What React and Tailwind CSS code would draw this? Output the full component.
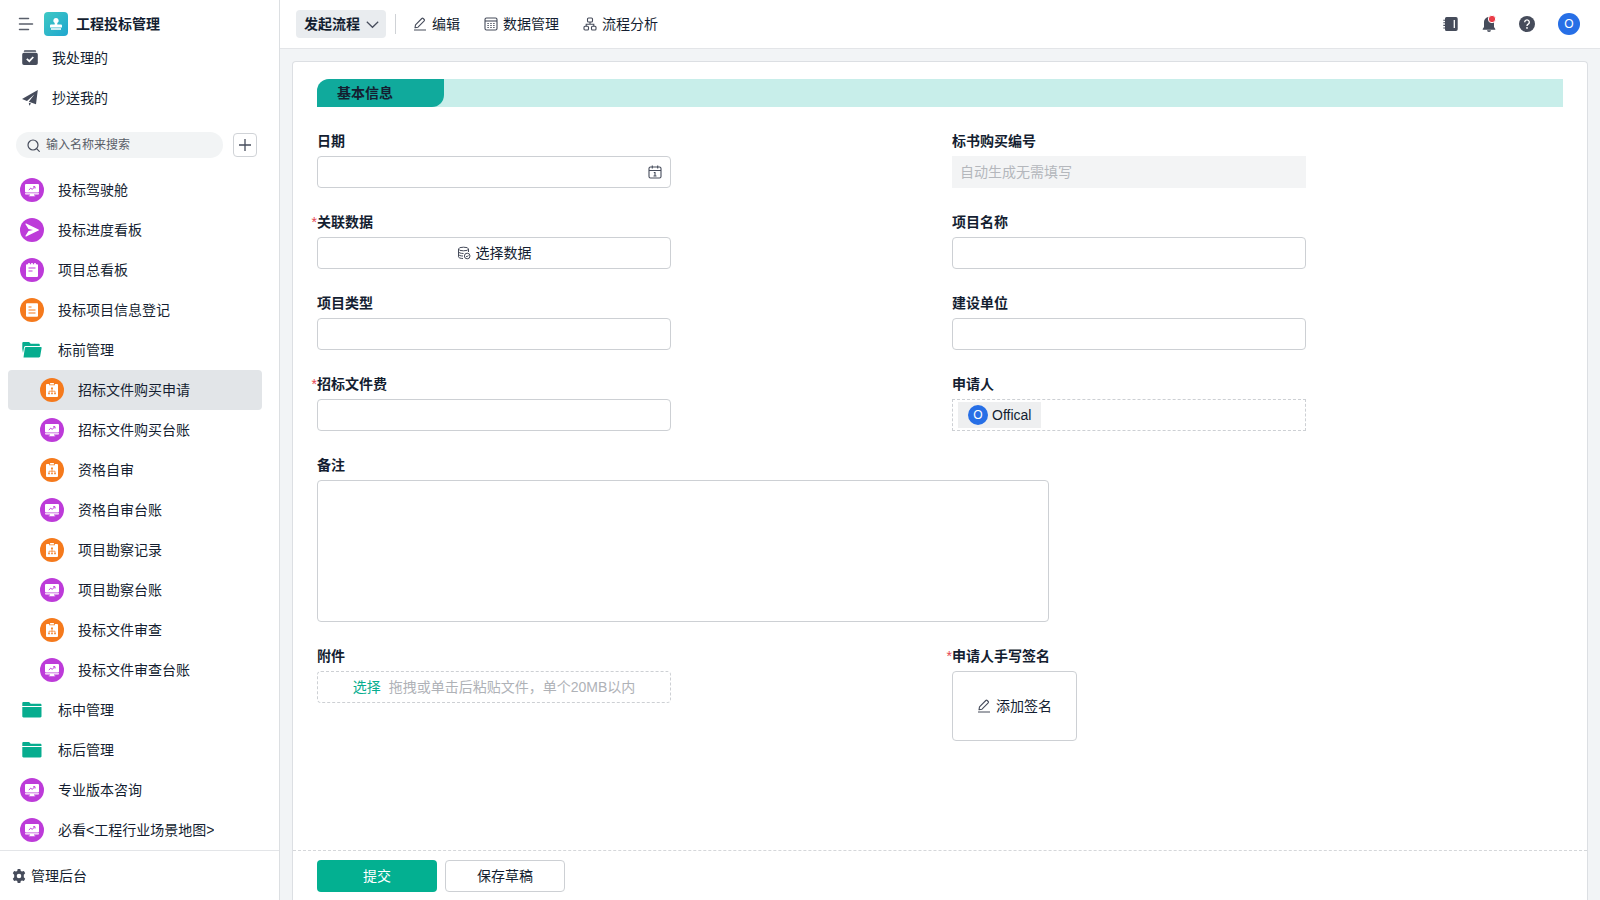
import React from 'react';
import clsx from 'clsx';

const navItems = [
  { label: '投标驾驶舱', icon: 'board' },
  { label: '投标进度看板', icon: 'send' },
  { label: '项目总看板', icon: 'note' },
  { label: '投标项目信息登记', icon: 'form' },
  { label: '标前管理', icon: 'folderOpen' },
  { label: '招标文件购买申请', icon: 'flow', child: true, active: true },
  { label: '招标文件购买台账', icon: 'board', child: true },
  { label: '资格自审', icon: 'flow', child: true },
  { label: '资格自审台账', icon: 'board', child: true },
  { label: '项目勘察记录', icon: 'flow', child: true },
  { label: '项目勘察台账', icon: 'board', child: true },
  { label: '投标文件审查', icon: 'flow', child: true },
  { label: '投标文件审查台账', icon: 'board', child: true },
  { label: '标中管理', icon: 'folder' },
  { label: '标后管理', icon: 'folder' },
  { label: '专业版本咨询', icon: 'board' },
  { label: '必看<工程行业场景地图>', icon: 'board' },
];

const navIcons = {
  board: (
    <>
      <circle cx="12" cy="12" r="12" fill="#bd3bd9" />
      <rect x="5" y="6" width="14" height="8.5" rx="1" fill="#fff" />
      <path d="M5 15.200h14v.6a.8.8 0 0 1-.8.8H14v.9h1.200v.8H8.800v-.8H10v-.9H5.800a.8.8 0 0 1-.8-.8z" fill="#fff" />
      <path d="M8.800 12l2-1.800 1.300 1.200 2.300-2.200M13.200 8.700H15V10.500" fill="none" stroke="#bd3bd9" strokeWidth="1" />
    </>
  ),
  send: (
    <>
      <circle cx="12" cy="12" r="12" fill="#bd3bd9" />
      <path d="M5.500 6.200c-.3-.6.200-.9.700-.7l12.300 5.900c.6.3.6.900 0 1.200L6.200 18.500c-.5.200-1-.1-.7-.7L8.500 13l4.500-1-4.500-1z" fill="#fff" />
    </>
  ),
  note: (
    <>
      <circle cx="12" cy="12" r="12" fill="#bd3bd9" />
      <path d="M7 6.200h1.200V5h1.600v1.200h1.400V5h1.600v1.200h1.400V5h1.600v1.200H17a1 1 0 0 1 1 1V18a1 1 0 0 1-1 1H7a1 1 0 0 1-1-1V7.200a1 1 0 0 1 1-1z" fill="#fff" />
      <path d="M8.500 10h7M8.500 13h4" stroke="#bd3bd9" strokeWidth="1.200" />
    </>
  ),
  form: (
    <>
      <circle cx="12" cy="12" r="12" fill="#f57a1d" />
      <rect x="6" y="5.300" width="12" height="13.400" rx="1" fill="#fff" />
      <path d="M8.500 9h3M8.500 12h7M8.500 15h7" stroke="#f57a1d" strokeWidth="1.200" />
    </>
  ),
  flow: (
    <>
      <circle cx="12" cy="12" r="12" fill="#f57a1d" />
      <path d="M7 6h2.200v1.300h5.600V6H17a1 1 0 0 1 1 1v11a1 1 0 0 1-1 1H7a1 1 0 0 1-1-1V7a1 1 0 0 1 1-1z" fill="#fff" />
      <rect x="10" y="5" width="4" height="1.500" rx=".5" fill="#fff" />
      <path d="M12 11v3.500M9 14.800v-1.600h6v1.600" fill="none" stroke="#f57a1d" strokeWidth=".7" />
      <path d="M11.100 9.500h1.800v1.700h-1.800zM8.200 14.700h1.600v1.600H8.200zM11.200 14.700h1.600v1.600h-1.600zM14.200 14.700h1.600v1.600h-1.600z" fill="#f57a1d" />
    </>
  ),
  folder: (
    <path d="M2.300 5.300c0-.7.500-1.200 1.200-1.200h5.600l1.600 1.700h9.600c.7 0 1.200.5 1.200 1.200v1H2.300zM2.300 9h19.200v9.200c0 .7-.5 1.200-1.200 1.200H3.500c-.7 0-1.200-.5-1.200-1.200z" fill="#06ad8f" />
  ),
  folderOpen: (
    <path d="M2.300 5.300c0-.7.500-1.200 1.200-1.200h5.600l1.600 1.700h7.900c.7 0 1.200.5 1.200 1.200v1.100H5.600c-.8 0-1.300.4-1.500 1.200l-1.100 5.700-.7-4zM5.900 9h14.800c.7 0 1 .4.900 1l-1.400 8.300c-.1.700-.6 1.100-1.300 1.100H3.500l1.300-9.500c.1-.6.500-.9 1.100-.9z" fill="#06ad8f" />
  ),
};

function PencilIcon() {
  return (
    <svg className="size-[14px] shrink-0" viewBox="0 0 14 14" fill="none" stroke="#464c5b" strokeWidth="1.1" strokeLinejoin="round">
      <path d="M2 10.800l.5-3L8.800 1.500a1 1 0 0 1 1.400 0l1 1a1 1 0 0 1 0 1.400L5 10.200zM1 13h12" />
    </svg>
  );
}

function NavItem({ item }) {
  return (
    <a
      href="#"
      className={clsx(
        'flex h-10 items-center gap-[14px] rounded pr-3',
        item.child ? 'pl-8' : 'pl-3',
        item.active && 'bg-[#e2e5e8]'
      )}
    >
      <svg className="size-6 shrink-0" viewBox="0 0 24 24">
        {navIcons[item.icon]}
      </svg>
      <span className="truncate">{item.label}</span>
    </a>
  );
}

function Sidebar() {
  return (
    <aside className="flex w-70 shrink-0 flex-col border-r border-[#dcdfe2] bg-white">
      <div className="flex items-center pt-3 pr-4 pb-[2px] pl-[18px]">
        <button type="button" aria-label="菜单" className="mr-[10px]">
          <svg className="size-4" viewBox="0 0 16 16" stroke="#5a5f6b" strokeWidth="1.500" strokeLinecap="round">
            <path d="M1.500 2.500h9M1.500 8h13M1.500 13.500h9" />
          </svg>
        </button>
        <svg className="mr-2 size-6" viewBox="0 0 24 24">
          <defs>
            <linearGradient id="logo" x1="0" y1="0" x2="1" y2="1">
              <stop offset="0" stopColor="#3fc9c4" />
              <stop offset="1" stopColor="#1fa6cf" />
            </linearGradient>
          </defs>
          <rect width="24" height="24" rx="4" fill="url(#logo)" />
          <path d="M12 6a2.600 2.600 0 0 1 1.300 4.900V12.500H17a1 1 0 0 1 1 1v2H6v-2a1 1 0 0 1 1-1h3.700V10.900A2.600 2.600 0 0 1 12 6z" fill="#fff" />
          <path d="M7 16h10v2H7z" fill="#fff" opacity=".75" />
        </svg>
        <h1 className="font-bold">工程投标管理</h1>
      </div>

      <div className="pr-[17px] pl-2">
        <a href="#" className="flex h-10 items-center gap-[14px] pl-[14px]">
          <svg className="size-4" viewBox="0 0 16 16">
            <path d="M3 .2h10a1.200 1.200 0 0 1 1.200 1.200v.4H1.800v-.4A1.200 1.200 0 0 1 3 .2zM2 2.800h12a1.800 1.800 0 0 1 1.800 1.800v8.600A1.800 1.800 0 0 1 14 15H2A1.800 1.800 0 0 1 .2 13.200V4.600A1.800 1.800 0 0 1 2 2.800z" fill="#464c5b" />
            <path d="M4.800 8.800l2.500 2.400 4-4.200" fill="none" stroke="#fff" strokeWidth="1.700" />
          </svg>
          我处理的
        </a>
        <a href="#" className="flex h-10 items-center gap-[14px] pl-[14px]">
          <svg className="size-4" viewBox="0 0 16 16" fill="#464c5b">
            <path d="M15.800 0L0 9l5 2 7.500-6.800L6.800 11.700 14 14.300zM6.800 12.700l2.300.8-1.800 2.300z" />
          </svg>
          抄送我的
        </a>
      </div>

      <div className="flex items-center gap-[10px] pt-[14px] pr-[22px] pb-3 pl-4">
        <label className="flex h-[26px] min-w-0 flex-1 items-center gap-[5px] rounded-full bg-[#f2f4f5] pl-[10px]">
          <svg className="size-[15px] shrink-0" viewBox="0 0 15 15" fill="none" stroke="#464c5b" strokeWidth="1.200">
            <circle cx="7" cy="7" r="5" />
            <path d="M10.600 10.600l2.700 2.700" strokeLinecap="round" />
          </svg>
          <input
            type="text"
            aria-label="搜索"
            placeholder="输入名称来搜索"
            className="w-full min-w-0 bg-transparent text-xs outline-none placeholder:text-[#595e68]"
          />
        </label>
        <button type="button" aria-label="新建" className="flex size-6 items-center justify-center rounded border border-[#d0d3d7]">
          <svg className="size-[14px]" viewBox="0 0 14 14" stroke="#464c5b" strokeWidth="1.300">
            <path d="M7 1v12M1 7h12" />
          </svg>
        </button>
      </div>

      <nav className="min-h-0 flex-1 overflow-hidden pr-[17px] pl-2">
        {navItems.map((item) => (
          <NavItem key={item.label} item={item} />
        ))}
      </nav>

      <div className="flex h-[50px] shrink-0 items-center border-t border-[#e3e5e8] px-3">
        <a href="#" className="flex items-center gap-[5px]">
          <svg className="size-[14px]" viewBox="0 0 14 14">
            <path
              d="M5.700 0h2.600l.5 1.900 1.200.7 1.900-.6 1.300 2.300L11.800 5.700v2.600l1.400 1.400-1.300 2.300-1.900-.6-1.200.7-.5 1.900H5.700l-.5-1.900-1.200-.7-1.900.6L.8 9.700l1.400-1.400V5.700L.8 4.300 2.100 2l1.900.6 1.200-.7zM7 4.700a2.300 2.300 0 1 0 0 4.600 2.300 2.300 0 0 0 0-4.600z"
              fill="#464c5b"
              fillRule="evenodd"
            />
          </svg>
          管理后台
        </a>
      </div>
    </aside>
  );
}

function Header() {
  return (
    <header className="flex h-[49px] shrink-0 items-center justify-between border-b border-[#e3e5e8] bg-white pr-5 pl-4">
      <div className="flex items-center">
        <button type="button" className="flex h-7 items-center gap-[6px] rounded bg-[#e9ecef] pr-[7px] pl-2 font-bold">
          发起流程
          <svg className="size-[13px]" viewBox="0 0 13 13" fill="none" stroke="#464c5b" strokeWidth="1.200">
            <path d="M.8 3.800l5.700 5.500 5.700-5.500" />
          </svg>
        </button>
        <span className="ml-[9px] h-5 w-px bg-[#cfd2d6]" />
        <div className="ml-[17px] flex items-center gap-6">
          <button type="button" className="flex items-center gap-[5px]">
            <PencilIcon />
            编辑
          </button>
          <button type="button" className="flex items-center gap-[5px]">
            <svg className="size-[14px]" viewBox="0 0 14 14" fill="none" stroke="#464c5b" strokeWidth="1.100">
              <rect x="1" y="1" width="12" height="12" rx="1.500" />
              <path d="M1 4h12" />
              <path d="M3.400 6.500h1.400M6.300 6.500h1.400M9.200 6.500h1.400M3.400 8.500h1.400M6.300 8.500h1.400M9.200 8.500h1.400M3.400 10.500h1.400M6.300 10.500h1.400M9.200 10.500h1.400" />
            </svg>
            数据管理
          </button>
          <button type="button" className="flex items-center gap-[5px]">
            <svg className="size-[14px]" viewBox="0 0 14 14" fill="none" stroke="#464c5b" strokeWidth="1.100">
              <rect x="4.500" y="1" width="5" height="4" rx="1" />
              <rect x="1" y="9.300" width="4.500" height="3.700" rx="1" />
              <rect x="8.500" y="9.300" width="4.500" height="3.700" rx="1" />
              <path d="M7 5v2.200M3.200 9.300V7.200h7.600v2.100" />
            </svg>
            流程分析
          </button>
        </div>
      </div>

      <div className="flex items-center gap-[22px]">
        <button type="button" aria-label="通讯录">
          <svg className="size-4" viewBox="0 0 16 16">
            <path d="M3.500 1h9.500A1.700 1.700 0 0 1 14.700 2.700v10.600a1.700 1.700 0 0 1-1.700 1.700H3.500A1.500 1.500 0 0 1 2 13.500V2.500A1.500 1.500 0 0 1 3.500 1z" fill="#464c5b" />
            <path d="M.3 4.200h2.500M.3 6.800h2.500M.3 9.400h2.500M.3 12h2.500" stroke="#464c5b" strokeWidth="1.100" />
            <path d="M11.300 4v8" stroke="#fff" strokeWidth="1.300" />
          </svg>
        </button>
        <button type="button" aria-label="消息">
          <svg className="size-4 overflow-visible" viewBox="0 0 16 16">
            <path d="M8 1a5 5 0 0 1 5 5v5l1.300 2v.8H1.700V13L3 11V6a5 5 0 0 1 5-5zM6 14.300h4a2 1.700 0 0 1-4 0z" fill="#464c5b" />
            <circle cx="11" cy="3" r="3.700" fill="#ea3d48" stroke="#fff" strokeWidth="1" />
          </svg>
        </button>
        <button type="button" aria-label="帮助">
          <svg className="size-4" viewBox="0 0 16 16">
            <circle cx="8" cy="8" r="8" fill="#464c5b" />
            <path d="M5.700 6.200a2.300 2.300 0 1 1 3.500 2c-.8.500-1.200.9-1.200 1.700" fill="none" stroke="#fff" strokeWidth="1.400" />
            <circle cx="8" cy="11.900" r=".9" fill="#fff" />
          </svg>
        </button>
        <button type="button" aria-label="账号" className="ml-px flex size-[22px] items-center justify-center rounded-full bg-[#276fe6] text-xs text-white">
          O
        </button>
      </div>
    </header>
  );
}

function Field({ id, label, required, wide, children }) {
  return (
    <div className={clsx('min-w-0', wide && 'col-span-2')}>
      <label htmlFor={id} className="relative mb-[5px] block w-fit leading-5 font-bold">
        {required && <span className="absolute right-full font-normal text-[#e64552]">*</span>}
        {label}
      </label>
      {children}
    </div>
  );
}

function TextInput({ id }) {
  return <input id={id} type="text" className="block h-8 w-full max-w-[354px] rounded border border-[#cdd0d4] px-2 outline-none" />;
}

function FlowForm() {
  return (
    <form className="flex min-h-0 flex-1 flex-col rounded-t border border-b-0 border-[#dcdfe3] bg-white">
      <div className="min-h-0 flex-1 overflow-hidden px-6 pt-[17px]">
        <div className="rounded-tl-xl bg-[#c8eeea]">
          <h2 className="flex h-7 w-[127px] items-center rounded-tl-xl rounded-br-xl bg-[#10aa9c] pl-5 font-bold">基本信息</h2>
        </div>

        <div className="mt-6 grid grid-cols-2 gap-6">
          <Field id="date" label="日期">
            <div className="relative max-w-[354px]">
              <TextInput id="date" />
              <svg className="pointer-events-none absolute top-[9px] right-[9px] size-[14px]" viewBox="0 0 14 14" fill="none" stroke="#464c5b" strokeWidth="1.100">
                <rect x="1" y="2" width="12" height="11" rx="1.500" />
                <path d="M1 5.500h12M4.300.5v3M9.700.5v3M5.800 7.500H7v3.500M5.500 11h3" />
              </svg>
            </div>
          </Field>
          <Field id="serial" label="标书购买编号">
            <input
              id="serial"
              type="text"
              disabled
              placeholder="自动生成无需填写"
              className="block h-8 w-full max-w-[354px] bg-[#f3f4f5] px-2 placeholder:text-[#b4b7bc]"
            />
          </Field>
          <Field id="relation" label="关联数据" required>
            <button id="relation" type="button" className="flex h-8 w-full max-w-[354px] items-center justify-center gap-[5px] rounded border border-[#cdd0d4]">
              <svg className="size-[14px]" viewBox="0 0 14 14" fill="none" stroke="#464c5b" strokeWidth="1">
                <ellipse cx="6.500" cy="3" rx="5" ry="1.800" />
                <path d="M1.500 3v7.800c0 1 2 1.700 4.500 1.700M11.500 3v3M1.500 5.700c0 1 2.200 1.800 5 1.800M1.500 8.300c0 1 2 1.700 4.500 1.700" />
                <circle cx="10.200" cy="10" r="2.800" />
                <path d="M9 10l.9.900 1.500-1.600" />
              </svg>
              选择数据
            </button>
          </Field>
          <Field id="project" label="项目名称">
            <TextInput id="project" />
          </Field>
          <Field id="type" label="项目类型">
            <TextInput id="type" />
          </Field>
          <Field id="owner" label="建设单位">
            <TextInput id="owner" />
          </Field>
          <Field id="fee" label="招标文件费" required>
            <TextInput id="fee" />
          </Field>
          <Field id="applicant" label="申请人">
            <div className="flex h-8 max-w-[354px] items-center border border-dashed border-[#cdd0d4] px-[5px]">
              <button id="applicant" type="button" className="flex h-[26px] items-center gap-1 bg-[#eeeff0] px-[10px]">
                <span className="flex size-5 items-center justify-center rounded-full bg-[#276fe6] text-xs text-white">O</span>
                Offical
              </button>
            </div>
          </Field>
          <Field id="remark" label="备注" wide>
            <textarea id="remark" className="block h-[142px] w-full max-w-[732px] resize-none rounded border border-[#cdd0d4] p-2 outline-none" />
          </Field>
          <Field id="attachment" label="附件">
            <button
              id="attachment"
              type="button"
              className="flex h-8 w-full max-w-[354px] items-center justify-center gap-2 rounded-sm border border-dashed border-[#cdd0d4] text-[#afb2b7]"
            >
              <span className="text-[#06ad8f]">选择</span>
              <span>拖拽或单击后粘贴文件，单个20MB以内</span>
            </button>
          </Field>
          <Field id="signature" label="申请人手写签名" required>
            <button id="signature" type="button" className="flex h-[70px] w-[125px] items-center justify-center gap-[5px] rounded border border-[#cdd0d4]">
              <PencilIcon />
              添加签名
            </button>
          </Field>
        </div>
      </div>

      <div className="flex shrink-0 gap-2 border-t border-dashed border-[#d5d7da] px-6 pt-[9px] pb-2">
        <button type="button" className="h-8 w-[120px] rounded bg-[#03b091] text-white">
          提交
        </button>
        <button type="button" className="h-8 w-[120px] rounded border border-[#cdd0d4]">
          保存草稿
        </button>
      </div>
    </form>
  );
}

export default function App() {
  return (
    <div className="flex h-screen overflow-hidden bg-[#f2f4f6] font-['Liberation_Sans','Noto_Sans_CJK_SC',sans-serif] text-sm text-[#141e31]">
      <Sidebar />
      <div className="flex min-w-0 flex-1 flex-col">
        <Header />
        <main className="flex min-h-0 flex-1 flex-col px-3 pt-3">
          <FlowForm />
        </main>
      </div>
    </div>
  );
}
